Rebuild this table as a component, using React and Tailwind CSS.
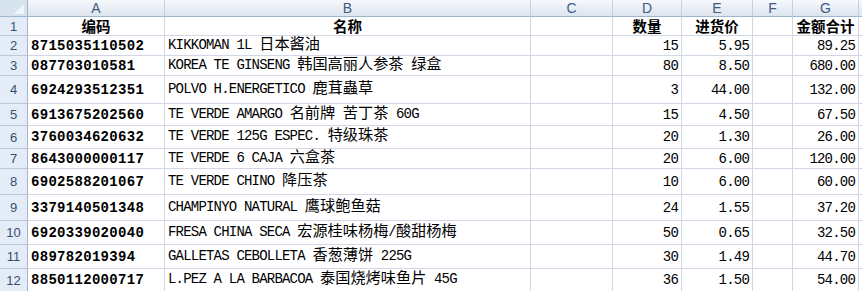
const letters = ['A', 'B', 'C', 'D', 'E', 'F', 'G', '']

const rows = [
  ['8715035110502', 'KIKKOMAN 1L 日本酱油', '15', '5.95', '89.25'],
  ['087703010581', 'KOREA TE GINSENG 韩国高丽人参茶 绿盒', '80', '8.50', '680.00'],
  ['6924293512351', 'POLVO H.ENERGETICO 鹿茸蟲草', '3', '44.00', '132.00'],
  ['6913675202560', 'TE VERDE AMARGO 名前牌 苦丁茶 60G', '15', '4.50', '67.50'],
  ['3760034620632', 'TE VERDE 125G ESPEC. 特级珠茶', '20', '1.30', '26.00'],
  ['8643000000117', 'TE VERDE 6 CAJA 六盒茶', '20', '6.00', '120.00'],
  ['6902588201067', 'TE VERDE CHINO 降压茶', '10', '6.00', '60.00'],
  ['3379140501348', 'CHAMPINYO NATURAL 鹰球鲍鱼菇', '24', '1.55', '37.20'],
  ['6920339020040', 'FRESA CHINA SECA 宏源桂味杨梅/酸甜杨梅', '50', '0.65', '32.50'],
  ['089782019394', 'GALLETAS CEBOLLETA 香葱薄饼 225G', '30', '1.49', '44.70'],
  ['8850112000717', 'L.PEZ A LA BARBACOA 泰国烧烤味鱼片 45G', '36', '1.50', '54.00'],
]

const mono = 'font-["Liberation_Mono","Noto_Sans_CJK_SC",monospace]'
const cell =
  'flex items-center whitespace-pre leading-none border-r border-b border-[#d0d7e5] px-[3px] text-black'
const rowHead =
  'flex items-center justify-center border-r border-b border-r-[#9eb6ce] border-b-[#b9c9da] bg-[#e4ecf7] font-["Liberation_Sans",sans-serif] text-[13px] leading-none text-[#34506f]'

// SimSun-like: CJK is twice as wide as the latin half-width glyphs
function Mixed({ text }) {
  const parts = text.split(/([\u3000-\u303f\u4e00-\u9fff\uff00-\uffef]+)/)
  return (
    <span>
      {parts.map((p, i) =>
        /[\u3000-\u303f\u4e00-\u9fff\uff00-\uffef]/.test(p) ? (
          <span key={i} className="text-[15.2px] tracking-normal">{p}</span>
        ) : (
          p
        )
      )}
    </span>
  )
}

function HeadCell({ children }) {
  return (
    <div className={`${cell} justify-center font-["Noto_Sans_CJK_SC",sans-serif] text-[14.5px] font-bold`}>
      {children}
    </div>
  )
}

export default function App() {
  return (
    <div className="w-[862px] h-[297px] bg-white overflow-hidden">
      <div className="grid h-[291px] overflow-hidden grid-cols-[28px_137px_366px_82px_69px_71px_40px_66px_1fr] grid-rows-[17px_19px_20px_20px_28px_22px_23px_20px_26px_26px_24px_24px_23px]">
        {/* corner */}
        <div className="flex items-end justify-end pr-[3px] pb-[2px] border-r border-b border-[#9eb6ce] bg-[#d7e2ef]">
          <svg width="10" height="10" viewBox="0 0 10 10">
            <polygon points="10,0 10,10 0,10" fill="#f2f5f9" />
          </svg>
        </div>
        {letters.map((l, i) => (
          <div
            key={i}
            className="flex items-center justify-center border-r border-b border-r-[#c3d0df] border-b-[#9eb6ce] bg-linear-to-b from-[#f7f9fc] to-[#dce4ee] font-['Liberation_Sans',sans-serif] text-[14px] leading-none text-[#3e5c80]"
          >
            {l}
          </div>
        ))}

        {/* row 1: titles */}
        <div className={rowHead}>1</div>
        <HeadCell>编码</HeadCell>
        <HeadCell>名称</HeadCell>
        <div className={cell} />
        <HeadCell>数量</HeadCell>
        <HeadCell>进货价</HeadCell>
        <div className={cell} />
        <HeadCell>金额合计</HeadCell>
        <div className={cell} />

        {rows.map((r, i) => (
          <Row key={i} n={i + 2} r={r} />
        ))}
      </div>
    </div>
  )
}

function Row({ n, r }) {
  const num = `${cell} justify-end ${mono} text-[14px] tracking-[-0.8px]`
  return (
    <>
      <div className={rowHead}>{n}</div>
      <div className={`${cell} ${mono} text-[14px] font-bold tracking-[0.3px]`}>{r[0]}</div>
      <div className={`${cell} ${mono} text-[14px] tracking-[-0.8px]`}>
        <Mixed text={r[1]} />
      </div>
      <div className={cell} />
      <div className={num}>{r[2]}</div>
      <div className={num}>{r[3]}</div>
      <div className={cell} />
      <div className={num}>{r[4]}</div>
      <div className={cell} />
    </>
  )
}
